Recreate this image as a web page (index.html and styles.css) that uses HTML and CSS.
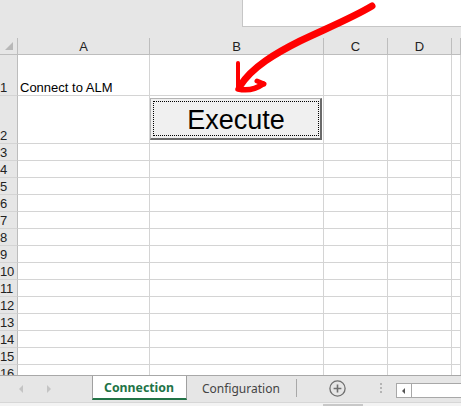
FILE: index.html
```html
<!DOCTYPE html>
<html>
<head>
<meta charset="utf-8">
<link rel="stylesheet" href="styles.css">
</head>
<body>
<div class="app">
  <div class="topbar"><div class="namebox"></div></div>
  <div class="sheet">
    <div class="grid">
      <div class="corner"><span class="tri"></span></div>
      <div class="ch">A</div><div class="ch">B</div><div class="ch">C</div><div class="ch">D</div><div class="ch"></div>

      <div class="rh">1</div><div class="c txt">Connect to ALM</div><div class="c"></div><div class="c"></div><div class="c"></div><div class="c"></div>
      <div class="rh">2</div><div class="c"></div><div class="c"></div><div class="c"></div><div class="c"></div><div class="c"></div>
      <div class="rh">3</div><div class="c"></div><div class="c"></div><div class="c"></div><div class="c"></div><div class="c"></div>
      <div class="rh">4</div><div class="c"></div><div class="c"></div><div class="c"></div><div class="c"></div><div class="c"></div>
      <div class="rh">5</div><div class="c"></div><div class="c"></div><div class="c"></div><div class="c"></div><div class="c"></div>
      <div class="rh">6</div><div class="c"></div><div class="c"></div><div class="c"></div><div class="c"></div><div class="c"></div>
      <div class="rh">7</div><div class="c"></div><div class="c"></div><div class="c"></div><div class="c"></div><div class="c"></div>
      <div class="rh">8</div><div class="c"></div><div class="c"></div><div class="c"></div><div class="c"></div><div class="c"></div>
      <div class="rh">9</div><div class="c"></div><div class="c"></div><div class="c"></div><div class="c"></div><div class="c"></div>
      <div class="rh">10</div><div class="c"></div><div class="c"></div><div class="c"></div><div class="c"></div><div class="c"></div>
      <div class="rh">11</div><div class="c"></div><div class="c"></div><div class="c"></div><div class="c"></div><div class="c"></div>
      <div class="rh">12</div><div class="c"></div><div class="c"></div><div class="c"></div><div class="c"></div><div class="c"></div>
      <div class="rh">13</div><div class="c"></div><div class="c"></div><div class="c"></div><div class="c"></div><div class="c"></div>
      <div class="rh">14</div><div class="c"></div><div class="c"></div><div class="c"></div><div class="c"></div><div class="c"></div>
      <div class="rh">15</div><div class="c"></div><div class="c"></div><div class="c"></div><div class="c"></div><div class="c"></div>
      <div class="rh">16</div><div class="c"></div><div class="c"></div><div class="c"></div><div class="c"></div><div class="c"></div>
    </div>
    <div class="btn"><span class="focus">Execute</span></div>
  </div>
  <div class="tabbar">
    <div class="tabrow">
      <div class="nav">
        <span class="ar ar-l"></span>
        <span class="ar ar-r"></span>
      </div>
      <div class="tab active">Connection</div>
      <div class="tab">Configuration</div>
      <div class="sep"></div>
      <div class="add">
        <svg width="17" height="17" viewBox="0 0 17 17"><circle cx="8.5" cy="8.5" r="7.6" fill="none" stroke="#6f6f6f" stroke-width="1.3"/><path d="M8.5 4.6v7.8M4.6 8.5h7.8" stroke="#6f6f6f" stroke-width="1.6"/></svg>
      </div>
      <div class="dots"><i></i><i></i><i></i></div>
      <div class="hscroll"><div class="sbtn"><span class="sbar"></span></div></div>
    </div>
    <div class="strip"><div class="thumb"></div></div>
  </div>
  <svg class="arrow" width="461" height="406" viewBox="0 0 461 406">
    <path d="M372,6 C352,18 325,29 300,41 C276,53 252,67 240,86" fill="none" stroke="#ff0000" stroke-width="7" stroke-linecap="round"/>
    <path d="M238,63 L238,89" fill="none" stroke="#ff0000" stroke-width="4" stroke-linecap="round"/>
    <path d="M238,89 Q252,92 263,84" fill="none" stroke="#ff0000" stroke-width="5.5" stroke-linecap="round"/>
    <path d="M257,81 L264,84" fill="none" stroke="#ff0000" stroke-width="5" stroke-linecap="round"/>
  </svg>
</div>
</body>
</html>
```
FILE: styles.css
```css
* { box-sizing: border-box; }
html, body { margin: 0; padding: 0; }
body {
  width: 461px;
  height: 406px;
  overflow: hidden;
  background: #ffffff;
  font-family: "Liberation Sans", Arial, sans-serif;
}
.app {
  position: relative;
  width: 461px;
  height: 406px;
  display: flex;
  flex-direction: column;
}
.topbar {
  height: 38px;
  background: #e6e6e6;
  display: flex;
  justify-content: flex-end;
  align-items: flex-start;
  flex: none;
}
.namebox {
  width: 219px;
  height: 27px;
  background: #ffffff;
  border-left: 1px solid #c6c6c6;
  border-bottom: 1px solid #c6c6c6;
}
.sheet {
  position: relative;
  height: 337px;
  overflow: hidden;
  flex: none;
}
.grid {
  display: grid;
  grid-template-columns: 18px 132px 174px 64px 64px 1fr;
  grid-template-rows: 17px 41px 48px repeat(14, 17px);
}
.corner {
  background: #e6e6e6;
  border-right: 1px solid #bdbdbd;
  border-bottom: 1px solid #bdbdbd;
  position: relative;
}
.tri {
  position: absolute;
  left: 5px;
  top: 4px;
  width: 0;
  height: 0;
  border-left: 8px solid transparent;
  border-bottom: 8px solid #b8b8b8;
}
.ch {
  background: #e6e6e6;
  border-right: 1px solid #bdbdbd;
  border-bottom: 1px solid #bdbdbd;
  display: flex;
  align-items: center;
  justify-content: center;
  font-size: 13px;
  color: #222;
}
.rh {
  background: #e6e6e6;
  border-right: 1px solid #bdbdbd;
  border-bottom: 1px solid #d4d4d4;
  display: flex;
  align-items: flex-end;
  padding-left: 0;
  font-size: 13px;
  line-height: 15px;
  color: #222;
  letter-spacing: -0.3px;
}
.c {
  border-right: 1px solid #d4d4d4;
  border-bottom: 1px solid #d4d4d4;
}
.txt {
  display: flex;
  align-items: flex-end;
  padding-left: 2px;
  font-size: 13px;
  line-height: 15px;
  color: #000;
}
.btn {
  position: absolute;
  left: 150px;
  top: 60px;
  width: 172px;
  height: 42px;
  background: #f0f0f0;
  border-top: 1px solid #b4b4b4;
  border-left: 1px solid #b4b4b4;
  border-right: 2px solid #6a6a6a;
  border-bottom: 2px solid #6a6a6a;
  padding: 2px 1px 2px 2px;
  display: flex;
}
.focus {
  flex: 1;
  border: 1px dotted #000;
  display: flex;
  align-items: center;
  justify-content: center;
  font-size: 27px;
  color: #000;
  padding-top: 3px;
}
.tabbar {
  height: 31px;
  flex: none;
  display: flex;
  flex-direction: column;
  background: #e6e6e6;
  border-top: 1px solid #a8a8a8;
}
.tabrow {
  height: 26px;
  display: flex;
  align-items: stretch;
}
.nav {
  width: 92px;
  display: flex;
  align-items: center;
  padding-left: 19px;
  gap: 24px;
}
.ar {
  width: 0;
  height: 0;
  border-top: 4px solid transparent;
  border-bottom: 4px solid transparent;
}
.ar-l { border-right: 4px solid #c4c4c4; }
.ar-r { border-left: 4px solid #c4c4c4; }
.tab {
  font-family: "Noto Sans", "Open Sans", sans-serif;
  font-size: 12px;
  display: flex;
  align-items: center;
  padding: 0 15px 1px 15px;
  color: #444;
}
.tab.active {
  width: 95px;
  background: #ffffff;
  border-left: 1px solid #a0a0a0;
  border-right: 1px solid #a0a0a0;
  border-bottom: 2px solid #217346;
  color: #217346;
  font-weight: bold;
  font-size: 12.3px;
  height: 24px;
  padding: 0 0 0 11px;
}
.sep {
  width: 1px;
  background: #a8a8a8;
  margin: 3px 0 5px 0;
  margin-left: 1px;
}
.add {
  width: 83px;
  display: flex;
  align-items: center;
  padding-left: 32px;
  padding-bottom: 2px;
}
.dots {
  width: 16px;
  display: flex;
  flex-direction: column;
  align-items: flex-start;
  justify-content: center;
  gap: 2px;
  padding-bottom: 3px;
}
.dots i {
  display: block;
  width: 2px;
  height: 2px;
  background: #b4b4b4;
}
.hscroll {
  flex: 1;
  margin: 7px 0 4px 0;
  background: #ffffff;
  border: 1px solid #a8a8a8;
  border-right: none;
  display: flex;
}
.sbtn {
  width: 15px;
  border-right: 1px solid #a8a8a8;
  display: flex;
  align-items: center;
  justify-content: center;
}
.sbar {
  width: 0;
  height: 0;
  border-top: 3px solid transparent;
  border-bottom: 3px solid transparent;
  border-right: 3px solid #555;
}
.strip {
  flex: 1;
  background: #f3f3f3;
  border-top: 1px solid #d6d6d6;
  position: relative;
}
.thumb {
  position: absolute;
  left: 323px;
  bottom: 0;
  width: 40px;
  height: 2px;
  background: #c8c8c8;
}
.arrow {
  position: absolute;
  left: 0;
  top: 0;
  pointer-events: none;
}
```
